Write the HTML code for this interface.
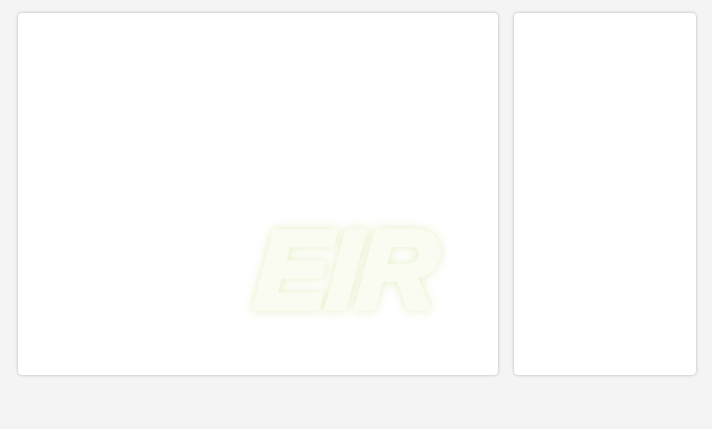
<!DOCTYPE html>
<html><head><style>
html,body{margin:0;padding:0;width:712px;height:429px;background:#f4f4f4;overflow:hidden;font-family:"Liberation Sans",sans-serif;}
.card{position:absolute;background:#fff;border-radius:4px;box-shadow:0 0 3px rgba(0,0,0,0.25);}
.logo{position:absolute;left:256px;top:216px;font-weight:bold;font-style:italic;font-size:110px;line-height:110px;color:#fafcf2;-webkit-text-stroke:6px #fafcf2;letter-spacing:-1px;filter:drop-shadow(0 0 5px rgba(220,235,180,0.8));transform:skewX(-4deg);}
</style></head><body>
<div class="card" style="left:18px;top:13px;width:480px;height:362px;"></div>
<div class="card" style="left:514px;top:13px;width:182px;height:362px;"></div>
<div class="logo">EIR</div>
</body></html>
